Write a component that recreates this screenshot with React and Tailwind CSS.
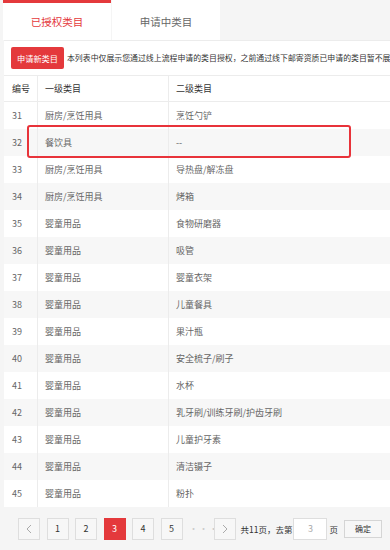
import React from "react";

const rows = [
  ["31", "厨房/烹饪用具", "烹饪勺铲"],
  ["32", "餐饮具", "--"],
  ["33", "厨房/烹饪用具", "导热盘/解冻盘"],
  ["34", "厨房/烹饪用具", "烤箱"],
  ["35", "婴童用品", "食物研磨器"],
  ["36", "婴童用品", "吸管"],
  ["37", "婴童用品", "婴童衣架"],
  ["38", "婴童用品", "儿童餐具"],
  ["39", "婴童用品", "果汁瓶"],
  ["40", "婴童用品", "安全梳子/刷子"],
  ["41", "婴童用品", "水杯"],
  ["42", "婴童用品", "乳牙刷/训练牙刷/护齿牙刷"],
  ["43", "婴童用品", "儿童护牙素"],
  ["44", "婴童用品", "清洁镊子"],
  ["45", "婴童用品", "粉扑"],
];

const font = { fontFamily: '"Noto Sans CJK SC", "Noto Sans", sans-serif' };

function PageBtn({ children, active }) {
  return (
    <div
      className={
        "w-[22px] h-[22px] flex items-center justify-center text-[9px] border " +
        (active
          ? "bg-[#e4393c] border-[#e4393c] text-white"
          : "bg-[#f7f7f7] border-[#dedede] text-[#333]")
      }
    >
      {children}
    </div>
  );
}

export default function App() {
  return (
    <div className="w-[390px] h-[550px] overflow-hidden bg-[#f5f5f5]" style={font}>
      {/* tabs */}
      <div className="flex h-[40px] pl-[3px]">
        <div className="w-[108px] bg-white border-t-[3px] border-[#e4393c] flex items-center justify-center text-[10.5px] text-[#e4393c] pt-[1px]">
          已授权类目
        </div>
        <div className="w-[108px] ml-[1px] bg-white flex items-center justify-center text-[10.5px] text-[#666] border-t-[3px] border-transparent pt-[1px]">
          申请中类目
        </div>
      </div>
      {/* panel */}
      <div className="ml-[4px] w-[386px] bg-white border-t border-[#ececec]">
        <div className="flex items-center h-[34px] pl-[7px] whitespace-nowrap overflow-hidden">
          <div className="h-[22px] px-[6px] bg-[#e4393c] text-white text-[8.2px] flex items-center rounded-[2px] shrink-0">
            申请新类目
          </div>
          <div className="ml-[3px] text-[7.9px] text-[#333]">
            本列表中仅展示您通过线上流程申请的类目授权，之前通过线下邮寄资质已申请的类目暂不展示
          </div>
        </div>
        <div className="relative border-t border-[#ececec]">
          <div className="grid grid-cols-[34px_131px_1fr] h-[26px] text-[9px] text-[#333] border-b border-[#ececec]">
            <div className="flex items-center pl-[8px] border-r border-[#ececec]">编号</div>
            <div className="flex items-center pl-[7px] border-r border-[#ececec]">一级类目</div>
            <div className="flex items-center pl-[7px]">二级类目</div>
          </div>
          {rows.map((r, i) => (
            <div
              key={r[0]}
              className={
                "grid grid-cols-[34px_131px_1fr] h-[27px] text-[9px] text-[#666] " +
                (i % 2 === 1 ? "bg-[#f7f7f7]" : "bg-white")
              }
            >
              <div className="flex items-center pl-[8px] border-r border-[#ececec]">{r[0]}</div>
              <div className="flex items-center pl-[7px] border-r border-[#ececec]">{r[1]}</div>
              <div className="flex items-center pl-[7px]">{r[2]}</div>
            </div>
          ))}
          <div className="absolute left-[23px] top-[49px] w-[324px] h-[33px] border-2 border-[#e8333a] rounded-[3px]" />
        </div>
      </div>
      {/* pagination */}
      <div className="flex items-center h-[44px] pl-[18px] whitespace-nowrap">
        <div className="flex items-center gap-[6.5px]">
          <div className="w-[22px] h-[22px] flex items-center justify-center border border-[#dedede] bg-[#f7f7f7] text-[#999]">
            <svg width="8" height="10" viewBox="0 0 8 10" fill="none" stroke="#aaa" strokeWidth="1"><path d="M6 1 L2 5 L6 9" /></svg>
          </div>
          <PageBtn>1</PageBtn>
          <PageBtn>2</PageBtn>
          <PageBtn active>3</PageBtn>
          <PageBtn>4</PageBtn>
          <PageBtn>5</PageBtn>
          <div className="w-[18px] text-center text-[9px] text-[#ccc] tracking-[1px]">···</div>
          <div className="w-[22px] h-[22px] flex items-center justify-center border border-[#dedede] bg-[#f7f7f7]">
            <svg width="8" height="10" viewBox="0 0 8 10" fill="none" stroke="#aaa" strokeWidth="1"><path d="M2 1 L6 5 L2 9" /></svg>
          </div>
        </div>
        <div className="ml-[5px] text-[8.5px] text-[#333]">共11页，去第</div>
        <div className="ml-[1px] w-[34px] h-[22px] bg-white border border-[#dedede] flex items-center justify-center text-[9px] text-[#aaa]">3</div>
        <div className="ml-[2px] text-[8.5px] text-[#333]">页</div>
        <div className="ml-[6px] w-[38px] h-[18px] bg-[#f7f7f7] border border-[#d5d5d5] flex items-center justify-center text-[8px] text-[#333]">确定</div>
      </div>
    </div>
  );
}
